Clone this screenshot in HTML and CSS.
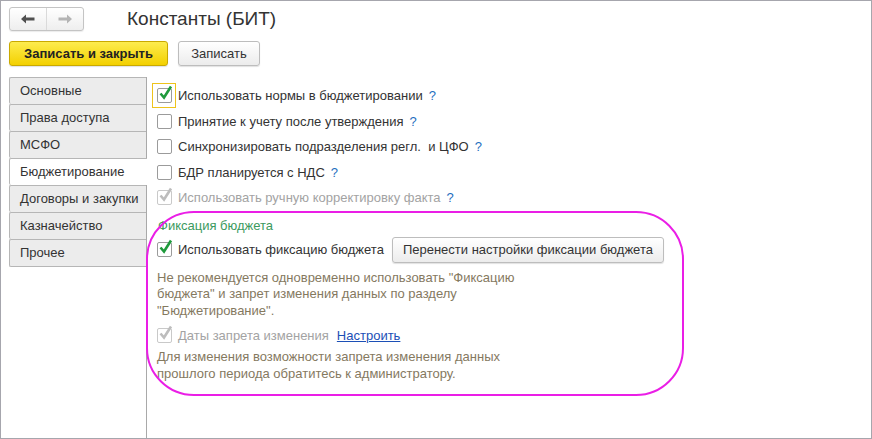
FILE: index.html
```html
<!DOCTYPE html>
<html lang="ru">
<head>
<meta charset="utf-8">
<title>Константы (БИТ)</title>
<link rel="stylesheet" href="styles.css">
</head>
<body>
<div class="window">
  <div class="header">
    <div class="nav">
      <button class="nav-btn back" aria-label="Назад">
        <svg width="14" height="10" viewBox="0 0 14 10"><path d="M0 5 L5 0.5 L5 3.6 L13.5 3.6 L13.5 6.4 L5 6.4 L5 9.5 Z" fill="#505050"/></svg>
      </button>
      <button class="nav-btn fwd" aria-label="Вперёд">
        <svg width="14" height="10" viewBox="0 0 14 10"><path d="M14 5 L9 0.5 L9 3.6 L0.5 3.6 L0.5 6.4 L9 6.4 L9 9.5 Z" fill="#b4b4b4"/></svg>
      </button>
    </div>
    <div class="title">Константы (БИТ)</div>
  </div>
  <div class="toolbar">
    <button class="btn primary">Записать и закрыть</button>
    <button class="btn">Записать</button>
  </div>
  <div class="main">
    <div class="tabs">
      <div class="tab">Основные</div>
      <div class="tab">Права доступа</div>
      <div class="tab">МСФО</div>
      <div class="tab active">Бюджетирование</div>
      <div class="tab">Договоры и закупки</div>
      <div class="tab">Казначейство</div>
      <div class="tab last">Прочее</div>
    </div>
    <div class="content">
      <div class="row">
        <span class="cbwrap focus"><span class="cb checked"><svg class="tick" viewBox="0 0 13 15"><path d="M1.5 8.5 L5 12.5 L12 1.5" fill="none" stroke="#1f9a3c" stroke-width="2.6"/></svg></span></span>
        <span class="label">Использовать нормы в бюджетировании</span><span class="help">?</span>
      </div>
      <div class="row">
        <span class="cbwrap"><span class="cb"></span></span>
        <span class="label">Принятие к учету после утверждения</span><span class="help">?</span>
      </div>
      <div class="row">
        <span class="cbwrap"><span class="cb"></span></span>
        <span class="label">Синхронизировать подразделения регл.&nbsp; и ЦФО</span><span class="help">?</span>
      </div>
      <div class="row">
        <span class="cbwrap"><span class="cb"></span></span>
        <span class="label">БДР планируется с НДС</span><span class="help">?</span>
      </div>
      <div class="row disabled">
        <span class="cbwrap"><span class="cb checked"><svg class="tick" viewBox="0 0 13 15"><path d="M1.5 8.5 L5 12.5 L12 1.5" fill="none" stroke="#bdbdbd" stroke-width="2.6"/></svg></span></span>
        <span class="label">Использовать ручную корректировку факта</span><span class="help">?</span>
      </div>
      <div class="group-title">Фиксация бюджета</div>
      <div class="row fix-row">
        <span class="cbwrap"><span class="cb checked"><svg class="tick" viewBox="0 0 13 15"><path d="M1.5 8.5 L5 12.5 L12 1.5" fill="none" stroke="#1f9a3c" stroke-width="2.6"/></svg></span></span>
        <span class="label">Использовать фиксацию бюджета</span>
        <button class="btn transfer">Перенести настройки фиксации бюджета</button>
      </div>
      <div class="note first-note">Не рекомендуется одновременно использовать "Фиксацию<br>бюджета" и запрет изменения данных по разделу<br>"Бюджетирование".</div>
      <div class="row dates disabled">
        <span class="cbwrap"><span class="cb checked"><svg class="tick" viewBox="0 0 13 15"><path d="M1.5 8.5 L5 12.5 L12 1.5" fill="none" stroke="#bdbdbd" stroke-width="2.6"/></svg></span></span>
        <span class="label">Даты запрета изменения</span>
        <a class="link" href="#">Настроить</a>
      </div>
      <div class="note second-note">Для изменения возможности запрета изменения данных<br>прошлого периода обратитесь к администратору.</div>
    </div>
  </div>
  <div class="annotation"></div>
</div>
</body>
</html>
```
FILE: styles.css
```css
* { box-sizing: border-box; }
html, body { margin: 0; padding: 0; background: #fff; }
body {
  font-family: "Liberation Sans", Arial, sans-serif;
  font-size: 13px;
  color: #333;
}
.window {
  position: relative;
  width: 872px;
  height: 439px;
  border: 1px solid #a6a6ad;
  display: flex;
  flex-direction: column;
  overflow: hidden;
}
.header {
  display: flex;
  align-items: center;
  padding: 6px 0 0 8px;
  height: 30px;
}
.nav {
  display: flex;
  height: 24px;
  border: 1px solid #c4c4c4;
  border-radius: 3px;
  background: linear-gradient(#ffffff, #eeeeee);
  box-shadow: 0 1px 1px rgba(0,0,0,0.08);
}
.nav-btn {
  width: 36px;
  height: 22px;
  border: 0;
  background: transparent;
  padding: 0;
  display: flex;
  align-items: center;
  justify-content: center;
}
.nav-btn.back { border-right: 1px solid #dadada; width: 37px; }
.title {
  margin-left: 43px;
  font-size: 19px;
  color: #333;
  line-height: 26px;
}
.toolbar {
  display: flex;
  gap: 10px;
  padding: 10px 0 0 8px;
  height: 35px;
}
.btn {
  font-family: "Liberation Sans", Arial, sans-serif;
  font-size: 13px;
  color: #333;
  height: 25px;
  padding: 0 14px;
  border: 1px solid #bdbdbd;
  border-radius: 3px;
  background: linear-gradient(#ffffff, #ececec);
  box-shadow: 0 1px 1px rgba(0,0,0,0.12);
}
.btn.primary {
  width: 159px;
  font-weight: bold;
  color: #222;
  border-color: #c9a900;
  background: linear-gradient(#fdec4f, #f3d000);
}
.toolbar .btn:not(.primary) { width: 82px; padding: 0; }
.main {
  display: flex;
  flex: 1;
  margin-top: 11px;
  padding-left: 8px;
}
.tabs {
  width: 137px;
  display: flex;
  flex-direction: column;
  position: relative;
  z-index: 1;
}
.tab {
  height: 27px;
  line-height: 26px;
  padding-left: 10px;
  border: 1px solid #b6b6b6;
  border-right: 0;
  border-bottom: 0;
  background: #ececec;
  border-radius: 2px 0 0 2px;
  white-space: nowrap;
}
.tab.last { border-bottom: 1px solid #b6b6b6; height: 28px; }
.tab.active {
  background: #fff;
  margin-right: -1px;
}
.content {
  flex: 1;
  border-left: 1px solid #a9a9a9;
  padding: 6px 0 0 5px;
}
.row {
  display: flex;
  align-items: center;
  height: 25.5px;
}
.cbwrap {
  width: 24px;
  height: 25px;
  border: 1px solid transparent;
  display: flex;
  align-items: center;
  justify-content: center;
  margin-right: 2px;
}
.cbwrap.focus { border-color: #eec31c; }
.cb {
  position: relative;
  width: 15px;
  height: 15px;
  border: 1px solid #9b9b9b;
  border-radius: 2px;
  background: #fff;
}
.tick {
  position: absolute;
  left: 1px;
  top: -4px;
  width: 13px;
  height: 15px;
  overflow: visible;
}
.label { white-space: nowrap; }
.help {
  color: #1f6fc0;
  margin-left: 6px;
}
.disabled .label { color: #a3a3a3; }
.disabled .cb { border-color: #c9c9c9; }
.group-title {
  margin-top: 6px;
  padding-left: 6px;
  line-height: 18px;
  color: #3b9a5e;
}
.fix-row {
  height: 26px;
  margin-top: 2px;
}
.transfer {
  margin-left: 8px;
  width: 272px;
  height: 26px;
  padding: 0;
}
.note {
  padding-left: 5px;
  line-height: 16.5px;
  color: #85795f;
}
.first-note { margin-top: 7px; }
.dates { height: 22px; margin-top: 5px; }
.link {
  color: #1c4fb6;
  text-decoration: underline;
  margin-left: 8px;
}
.second-note { margin-top: 3px; }
.annotation {
  position: absolute;
  left: 145px;
  top: 210px;
  width: 538px;
  height: 185px;
  border: 2px solid #ea1ee6;
  border-radius: 48px;
  pointer-events: none;
}
```
